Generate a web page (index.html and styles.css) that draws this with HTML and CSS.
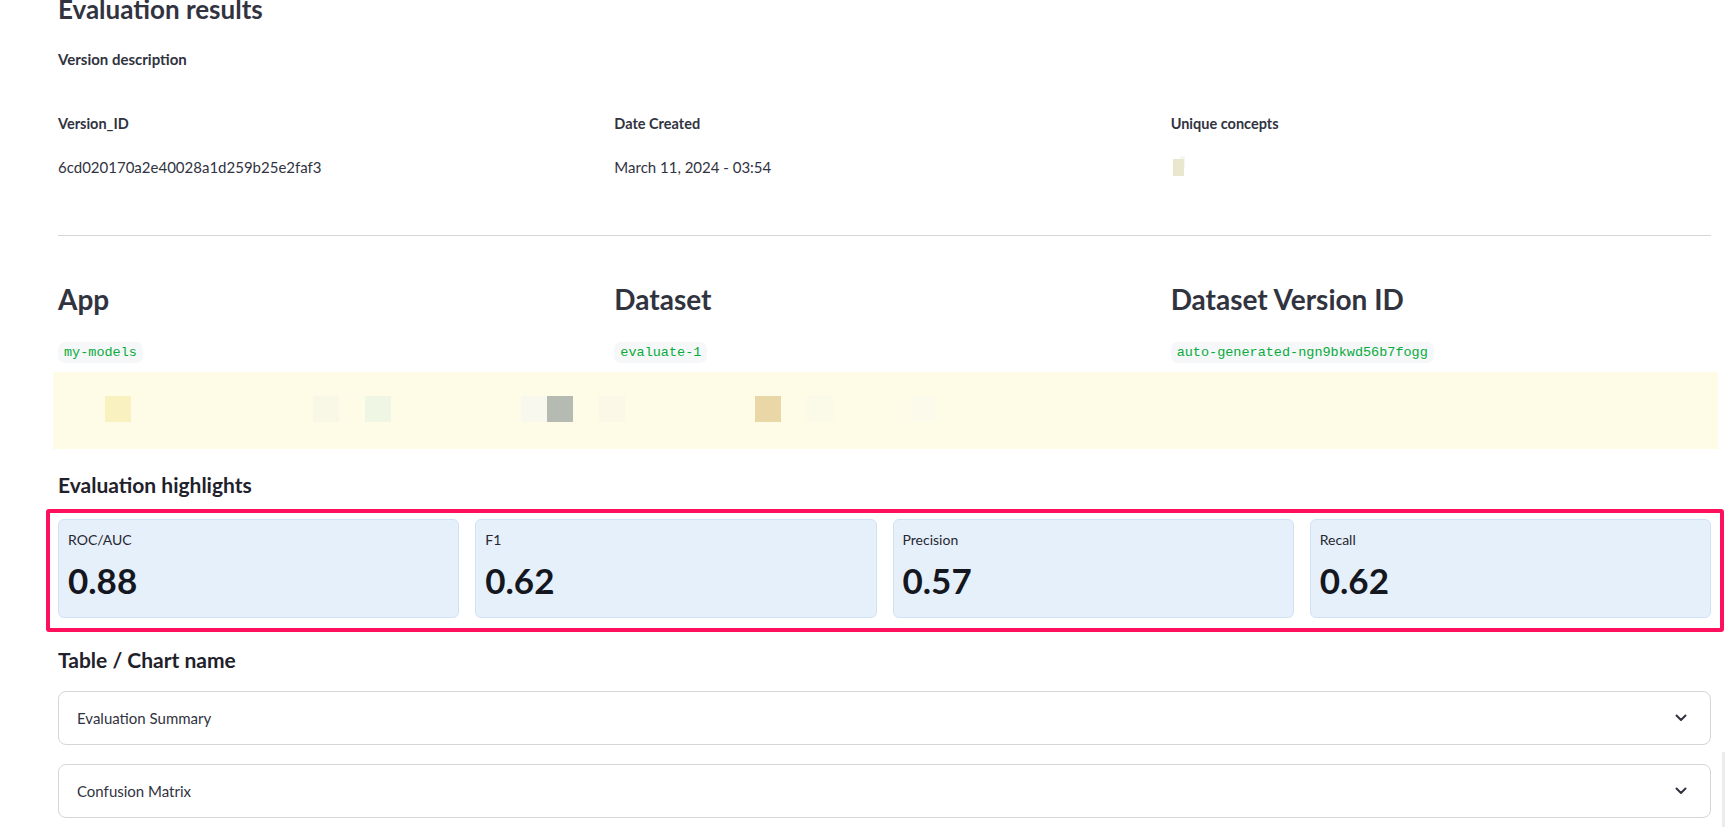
FILE: index.html
```html
<!DOCTYPE html>
<html>
<head>
<meta charset="utf-8">
<link rel="stylesheet" href="styles.css">
</head>
<body>
<main class="page">
  <h1 class="title">Evaluation results</h1>
  <div class="desc">Version description</div>

  <div class="meta">
    <div class="meta-col">
      <div class="meta-label">Version_ID</div>
      <div class="meta-value">6cd020170a2e40028a1d259b25e2faf3</div>
    </div>
    <div class="meta-col">
      <div class="meta-label">Date Created</div>
      <div class="meta-value">March 11, 2024 - 03:54</div>
    </div>
    <div class="meta-col">
      <div class="meta-label">Unique concepts</div>
      <div class="meta-value"><span class="blob"></span></div>
    </div>
  </div>

  <hr class="divider">

  <div class="sources">
    <div class="source">
      <h2 class="source-title">App</h2>
      <code class="chip">my-models</code>
    </div>
    <div class="source">
      <h2 class="source-title">Dataset</h2>
      <code class="chip">evaluate-1</code>
    </div>
    <div class="source">
      <h2 class="source-title">Dataset Version ID</h2>
      <code class="chip">auto-generated-ngn9bkwd56b7fogg</code>
    </div>
  </div>

  <div class="band">
    <div class="cells">
      <span class="cell c2"></span>
      <span class="cell c10"></span>
      <span class="cell c12"></span>
      <span class="cell c18"></span>
      <span class="cell c19"></span>
      <span class="cell c21"></span>
      <span class="cell c27"></span>
      <span class="cell c29"></span>
      <span class="cell c33"></span>
    </div>
  </div>

  <h3 class="section">Evaluation highlights</h3>
  <div class="highlight">
    <div class="card">
      <div class="card-label">ROC/AUC</div>
      <div class="card-value">0.88</div>
    </div>
    <div class="card">
      <div class="card-label">F1</div>
      <div class="card-value">0.62</div>
    </div>
    <div class="card">
      <div class="card-label">Precision</div>
      <div class="card-value">0.57</div>
    </div>
    <div class="card">
      <div class="card-label">Recall</div>
      <div class="card-value">0.62</div>
    </div>
  </div>

  <h3 class="section section-table">Table / Chart name</h3>
  <div class="expander">
    <span class="exp-label">Evaluation Summary</span>
    <svg class="chev" width="12" height="8" viewBox="0 0 12 8"><path d="M1.5 1.5 L6 6 L10.5 1.5" fill="none" stroke="#31333f" stroke-width="2" stroke-linecap="round" stroke-linejoin="round"/></svg>
  </div>
  <div class="expander expander-2">
    <span class="exp-label">Confusion Matrix</span>
    <svg class="chev" width="12" height="8" viewBox="0 0 12 8"><path d="M1.5 1.5 L6 6 L10.5 1.5" fill="none" stroke="#31333f" stroke-width="2" stroke-linecap="round" stroke-linejoin="round"/></svg>
  </div>
</main>
<div class="scroll-edge"></div>
</body>
</html>
```

FILE: styles.css
```css
* { box-sizing: border-box; }

html, body {
  margin: 0;
  padding: 0;
  background: #ffffff;
  overflow: hidden;
}

body {
  font-family: Lato, "Noto Sans", sans-serif;
  color: #31333f;
}

.page {
  width: 1725px;
  height: 827px;
  padding: 0 14px 0 58px;
  display: flex;
  flex-direction: column;
}

.title {
  margin: -10px 0 0 0;
  font-size: 26px;
  line-height: 38px;
  font-weight: 700;
  color: #31333f;
}

.desc {
  margin-top: 21px;
  font-size: 15px;
  line-height: 20px;
  font-weight: 700;
}

.meta {
  margin-top: 45px;
  display: grid;
  grid-template-columns: repeat(3, 1fr);
  column-gap: 16px;
}

.meta-label {
  font-size: 14.5px;
  line-height: 20px;
  font-weight: 700;
}

.meta-value {
  margin-top: 21px;
  font-size: 15px;
  line-height: 24px;
  height: 24px;
  display: flex;
  align-items: center;
}

.blob {
  display: inline-block;
  width: 11px;
  height: 17px;
  margin-left: 2px;
  background: #e9e8cf;
  box-shadow: 4px -6px 0 -3px #f7f7f2;
}

.divider {
  margin: 56px 0 0 0;
  border: 0;
  border-top: 1px solid #d6d6d9;
  height: 0;
}

.sources {
  margin-top: 43px;
  display: grid;
  grid-template-columns: repeat(3, 1fr);
  column-gap: 16px;
}

.source {
  display: flex;
  flex-direction: column;
  align-items: flex-start;
}

.source-title {
  margin: 0;
  font-size: 28px;
  line-height: 40px;
  font-weight: 700;
  color: #31333f;
}

.chip {
  margin-top: 23px;
  display: inline-block;
  font-family: "Liberation Mono", "DejaVu Sans Mono", monospace;
  font-size: 13.5px;
  line-height: 21px;
  height: 21px;
  padding: 0 6px;
  border-radius: 7px;
  background: #f5f7f9;
  color: #09ab3b;
}

.band {
  margin: 9px -7px 0 -5px;
  height: 77px;
  background: #fefbe7;
  padding-top: 24px;
}

.cells {
  display: grid;
  grid-template-columns: repeat(60, 26px);
  grid-template-rows: 26px;
}

.cell { display: block; }
.c2  { grid-column: 3;  background: #f9f1c0; }
.c10 { grid-column: 11; background: #f9f8e6; }
.c12 { grid-column: 13; background: #eff7e4; }
.c18 { grid-column: 19; background: #f8f8ee; }
.c19 { grid-column: 20; background: #b5bab3; }
.c21 { grid-column: 22; background: #fcf8e8; }
.c27 { grid-column: 28; background: #e9d7a7; }
.c29 { grid-column: 30; background: #fbf9e8; }
.c33 { grid-column: 34; background: #fcfaea; }

.section {
  margin: 22px 0 0 0;
  font-size: 21px;
  line-height: 28px;
  font-weight: 700;
  color: #1f212b;
}

.highlight {
  margin: 10px -13px 0 -12px;
  border: 4px solid #fe105c;
  border-radius: 3px;
  padding: 6px 9px 10px 8px;
  display: flex;
  gap: 16px;
}

.card {
  flex: 1;
  height: 99px;
  background: #e6f0fb;
  border: 1px solid #d2e2f6;
  border-radius: 6px;
  padding: 10px 9px 0 9px;
}

.card-label {
  font-size: 14px;
  line-height: 20px;
  color: #262730;
}

.card-value {
  margin-top: 8px;
  font-size: 35px;
  line-height: 44px;
  font-weight: 700;
  color: #141620;
}

.section-table {
  margin-top: 14px;
}

.expander {
  margin-top: 17px;
  height: 54px;
  border: 1px solid #d6d6d9;
  border-radius: 8px;
  padding: 0 23px 0 18px;
  display: flex;
  align-items: center;
  justify-content: space-between;
}

.expander-2 {
  margin-top: 19px;
}

.exp-label {
  font-size: 15px;
  color: #31333f;
}

.chev {
  display: block;
}

.scroll-edge {
  position: fixed;
  right: 0;
  top: 752px;
  width: 3px;
  height: 75px;
  background: #ececec;
}
```
